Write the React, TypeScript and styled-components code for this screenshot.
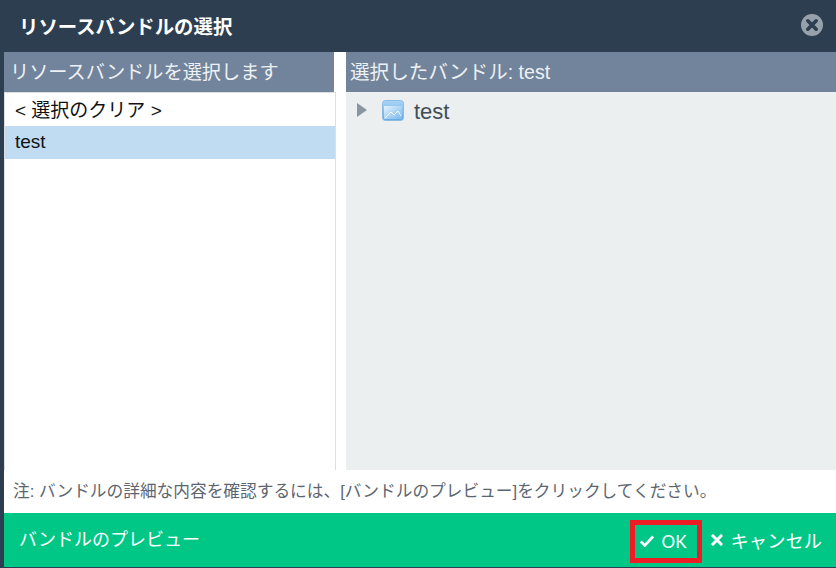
import { createGlobalStyle } from 'styled-components';
import styled from 'styled-components';

const GlobalStyle = createGlobalStyle`
  html, body {
    margin: 0;
    padding: 0;
    background: #2d3e50;
    overflow: hidden;
  }
  body {
    font-family: "Liberation Sans", "Noto Sans CJK JP", sans-serif;
  }
`;

const Dialog = styled.div`
  width: 836px;
  height: 568px;
  box-sizing: border-box;
  padding: 0 0 1px 4px;
  background: #2d3e50;
  display: flex;
  flex-direction: column;
`;

const TitleBar = styled.header`
  height: 52px;
  flex: none;
  margin-left: -4px;
  padding: 0 13px 2px 19px;
  box-sizing: border-box;
  display: flex;
  align-items: center;
  justify-content: space-between;
`;

const Title = styled.h1`
  margin: 0;
  font-size: 19.4px;
  font-weight: 700;
  color: #fff;
`;

const CloseButton = styled.button`
  width: 22px;
  height: 22px;
  padding: 0;
  border: 0;
  background: none;
  display: block;
`;

const Body = styled.div`
  flex: 1;
  display: grid;
  grid-template-columns: 332px 490px;
  column-gap: 10px;
  background: #fff;
`;

const Column = styled.section`
  display: flex;
  flex-direction: column;
  min-height: 0;
`;

const PanelHeader = styled.div<{ $inset: number; $size: number }>`
  height: 40px;
  flex: none;
  box-sizing: border-box;
  padding: 0 0 3px ${(p) => p.$inset}px;
  display: flex;
  align-items: center;
  background: #72849b;
  color: #eef1f3;
  font-size: ${(p) => p.$size}px;
`;

const LeftHeader = styled(PanelHeader)`
  width: 330px;
`;

const BundleList = styled.ul`
  flex: 1;
  margin: 0;
  padding: 0;
  list-style: none;
  border: 1px solid #dcdfe1;
  border-width: 1px 1px 0;
  box-sizing: border-box;
`;

const BundleItem = styled.li<{ $selected?: boolean }>`
  height: 33px;
  box-sizing: border-box;
  padding: 0 0 2px 10px;
  display: flex;
  align-items: center;
  font-size: 19px;
  color: #111;
  background: ${(p) => (p.$selected ? '#c0dcf2' : 'transparent')};
`;

const TreePanel = styled.div`
  flex: 1;
  background: #ebeff0;
  padding: 7px 0 0 11px;
`;

const TreeRow = styled.div`
  display: flex;
  align-items: center;
  height: 22px;
`;

const Expander = styled.span`
  width: 0;
  height: 0;
  border-style: solid;
  border-width: 7px 0 7px 10px;
  border-color: transparent transparent transparent #8b959f;
  margin-right: 15px;
`;

const TreeLabel = styled.span`
  margin-left: 10px;
  padding-top: 3px;
  font-size: 22px;
  color: #434d58;
`;

const Note = styled.p`
  height: 43px;
  flex: none;
  margin: 0;
  box-sizing: border-box;
  padding: 0 0 4px 9px;
  display: flex;
  align-items: center;
  background: #fff;
  color: #5d6670;
  font-size: 16.7px;
`;

const Footer = styled.footer`
  height: 54px;
  flex: none;
  box-sizing: border-box;
  padding: 0 14px 0 16px;
  display: flex;
  align-items: center;
  background: #00c785;
  color: #fff;
  font-size: 18px;
`;

const PreviewLink = styled.span`
  flex: 1;
  margin: -4px 0 0 -1px;
`;

const OkButton = styled.button`
  box-sizing: border-box;
  width: 72px;
  height: 43px;
  margin-top: 2px;
  padding: 0 0 0 5px;
  display: flex;
  align-items: center;
  gap: 8px;
  background: none;
  color: #fff;
  font-family: Lato, "Liberation Sans", sans-serif;
  font-size: 17px;
  font-weight: 400;
  border: 5px solid #ee1c25;
`;

const CancelButton = styled.button`
  height: 44px;
  margin-left: 9px;
  padding: 0;
  display: flex;
  align-items: center;
  gap: 8px;
  background: none;
  color: #fff;
  font: inherit;
  font-size: 18.3px;
  border: 0;
`;

function CloseIcon() {
  return (
    <svg width="22" height="22" viewBox="0 0 22 22">
      <circle cx="11" cy="11" r="11" fill="#97a1ab" />
      <path d="M6.8 6.8l8.4 8.4M15.2 6.8l-8.4 8.4" stroke="#2d3e50" strokeWidth="3.6" strokeLinecap="round" />
    </svg>
  );
}

function BundleIcon() {
  return (
    <svg width="22" height="21" viewBox="0 0 22 21">
      <defs>
        <linearGradient id="bundleBody" x1="0" y1="0" x2="1" y2="1">
          <stop offset="0" stopColor="#e4f2fd" />
          <stop offset="1" stopColor="#7ab8ec" />
        </linearGradient>
        <linearGradient id="bundleTop" x1="0" y1="0" x2="0" y2="1">
          <stop offset="0" stopColor="#a9d3f5" />
          <stop offset="1" stopColor="#64aae6" />
        </linearGradient>
      </defs>
      <rect x="0.5" y="0.5" width="21" height="20" rx="3" fill="url(#bundleTop)" stroke="#8bbbe2" />
      <rect x="2" y="6" width="18" height="13" fill="url(#bundleBody)" />
      <path d="M3 18l6-6 3 3 4-4 3 5" fill="none" stroke="#f2f9fe" strokeWidth="1" />
    </svg>
  );
}

function CheckIcon() {
  return (
    <svg width="14" height="12" viewBox="0 0 14 12">
      <path d="M0.8 6.4l4 4L13.2 1.4" fill="none" stroke="#fff" strokeWidth="2.8" />
    </svg>
  );
}

function CrossIcon() {
  return (
    <svg width="12" height="12" viewBox="0 0 12 12">
      <path d="M1 1l10 10M11 1L1 11" fill="none" stroke="#fff" strokeWidth="3" />
    </svg>
  );
}

export default function App() {
  return (
    <Dialog>
      <GlobalStyle />
      <TitleBar>
        <Title>リソースバンドルの選択</Title>
        <CloseButton aria-label="閉じる">
          <CloseIcon />
        </CloseButton>
      </TitleBar>
      <Body>
        <Column>
          <LeftHeader $inset={6} $size={19.2}>リソースバンドルを選択します</LeftHeader>
          <BundleList>
            <BundleItem>&lt; 選択のクリア &gt;</BundleItem>
            <BundleItem $selected>test</BundleItem>
          </BundleList>
        </Column>
        <Column>
          <PanelHeader $inset={4} $size={19.6}>選択したバンドル: test</PanelHeader>
          <TreePanel>
            <TreeRow>
              <Expander />
              <BundleIcon />
              <TreeLabel>test</TreeLabel>
            </TreeRow>
          </TreePanel>
        </Column>
      </Body>
      <Note>注: バンドルの詳細な内容を確認するには、[バンドルのプレビュー]をクリックしてください。</Note>
      <Footer>
        <PreviewLink>バンドルのプレビュー</PreviewLink>
        <OkButton>
          <CheckIcon />
          OK
        </OkButton>
        <CancelButton>
          <CrossIcon />
          キャンセル
        </CancelButton>
      </Footer>
    </Dialog>
  );
}
